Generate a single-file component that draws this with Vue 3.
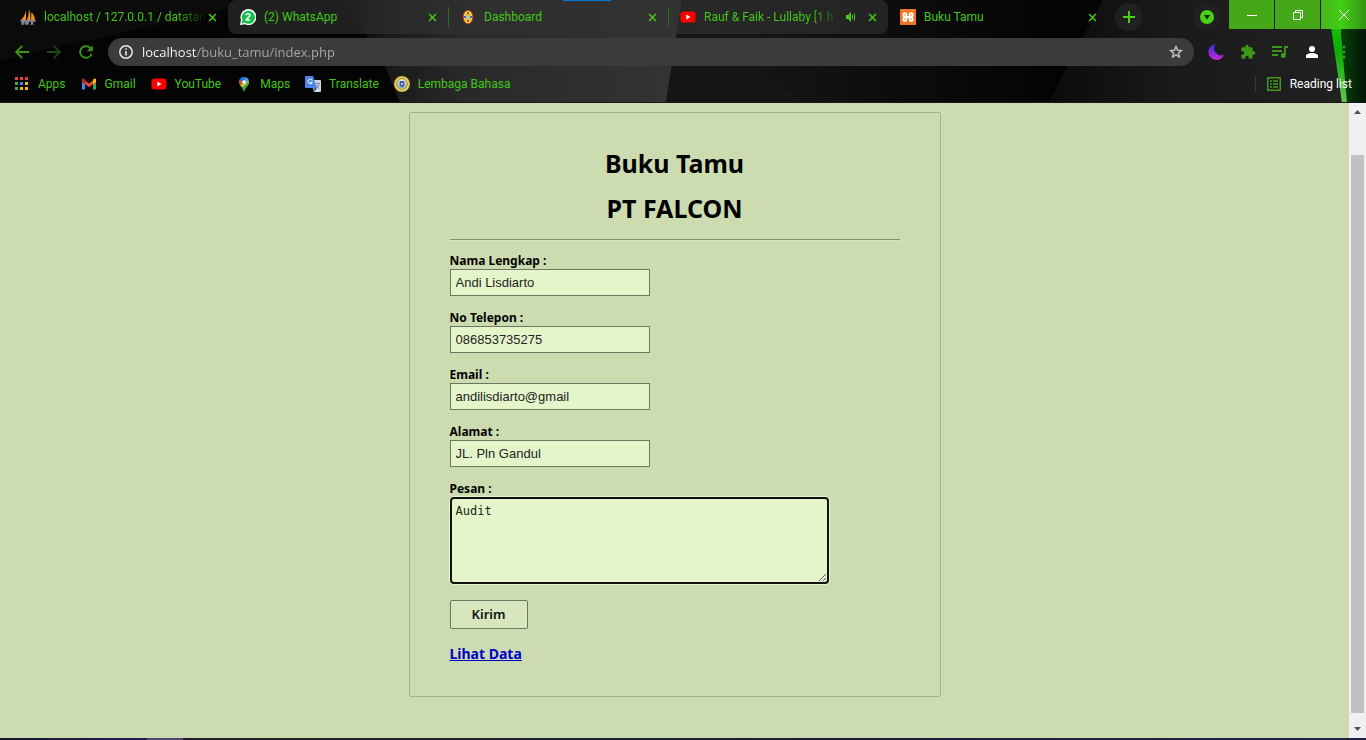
<script setup>
import { ref } from 'vue'

const address = ref('localhost/buku_tamu/index.php')
const tabs = [
  { title: 'localhost / 127.0.0.1 / datatan', icon: 'pma', kind: 'dark', fade: true },
  { title: '(2) WhatsApp', icon: 'whatsapp', kind: 'first' },
  { title: 'Dashboard', icon: 'crest', kind: 'split' },
  { title: 'Rauf & Faik - Lullaby [1 h', icon: 'youtube', kind: 'last', sound: true, fade: true },
  { title: 'Buku Tamu', icon: 'xampp', kind: 'dark' },
]
const bookmarks = [
  { title: 'Apps', icon: 'apps' },
  { title: 'Gmail', icon: 'gmail' },
  { title: 'YouTube', icon: 'youtube' },
  { title: 'Maps', icon: 'maps' },
  { title: 'Translate', icon: 'translate' },
  { title: 'Lembaga Bahasa', icon: 'seal' },
]
const dots = [0, 1, 2].flatMap((r) => [0, 1, 2].map((c) => ({ r, c })))
const dotColors = ['#ea4335', '#ea4335', '#ea4335', '#34a853', '#4285f4', '#fbbc05', '#34a853', '#fbbc05', '#fbbc05']
const fields = ref([
  { id: 'nama', label: 'Nama Lengkap :', value: 'Andi Lisdiarto' },
  { id: 'telepon', label: 'No Telepon :', value: '086853735275' },
  { id: 'email', label: 'Email :', value: 'andilisdiarto@gmail' },
  { id: 'alamat', label: 'Alamat :', value: 'JL. Pln Gandul' },
])
const pesan = ref('Audit')
</script>

<template>
  <div class="window">
    <svg class="defs" width="0" height="0" aria-hidden="true">
      <symbol id="i-pma" viewBox="0 0 16 16">
        <path d="M6 1 6 11H1Q5 7 6 1zM9 0Q11 5 10.5 11H7Q9 6 9 0zM11.500 3Q15 7 15 11h-4z" fill="#f39018" />
        <path d="M0 11h16l-1 2H1z" fill="#7b7d97" />
        <path d="M2 16v-3h2v2H2M6 16v-3l1 2 1-2v3M11 16l1-3 1.500 3" fill="none" stroke="#a3a5b5" />
      </symbol>
      <symbol id="i-whatsapp" viewBox="0 0 16 16">
        <path d="M0 16l1-5A8 8 0 1 1 5 15.300z" fill="#fff" />
        <path d="M1.500 14.500l1-3.500A6.500 6.500 0 1 1 5 13.800z" fill="#0cc143" />
        <path d="M6 6.300C6 4.200 10 4.300 10 6.300 10 8 6.300 9.500 6.100 11H10.200" fill="none" stroke="#fff" stroke-width="1.500" />
      </symbol>
      <symbol id="i-crest" viewBox="0 0 16 16">
        <ellipse cx="8" cy="8" rx="4.700" ry="6.600" fill="#ffdc32" stroke="#dd4823" />
        <path d="M8 2.500v11M4 8h8M5 5l6 6M11 5l-6 6" stroke="#d98d31" />
        <circle cx="8" cy="8" r="2" fill="#a7d0c0" />
        <path d="M7 3h2v2H7zM7 11h2v2H7zM4 7h2v2H4zM10 7h2v2h-2z" fill="#5160a0" />
      </symbol>
      <symbol id="i-youtube" viewBox="0 0 16 16">
        <rect y="2.500" x=".5" width="15" height="11" rx="2.800" fill="#f00" />
        <path d="M6.300 5.600v4.800L10.500 8z" fill="#fff" />
      </symbol>
      <symbol id="i-xampp" viewBox="0 0 16 16">
        <rect width="16" height="16" rx="1" fill="#f37623" />
        <path d="M6.300 8V5.500C6.300 3.600 3.300 3.600 3.300 5.500 3.300 6.500 3.800 7.300 4.500 8 3.800 8.700 3.300 9.500 3.300 10.500 3.300 12.400 6.300 12.400 6.300 10.500V8H9.700V5.500C9.700 3.600 12.700 3.600 12.700 5.500 12.700 6.500 12.200 7.300 11.500 8 12.200 8.700 12.700 9.500 12.700 10.500 12.700 12.400 9.700 12.400 9.700 10.500V8" fill="none" stroke="#fff" stroke-width="1.900" stroke-linejoin="round" />
      </symbol>
      <symbol id="i-apps" viewBox="0 0 16 16">
        <rect v-for="(d, i) in dots" :key="i" :x="1 + d.c * 5" :y="1 + d.r * 5" width="3" height="3" :fill="dotColors[i]" />
      </symbol>
      <symbol id="i-gmail" viewBox="0 0 16 16">
        <path d="M1 4v9.500h3V7z" fill="#4285f4" />
        <path d="M15 4v9.500h-3V7z" fill="#34a853" />
        <path d="M4 4.500l4 3 4-3V8.200l-4 3-4-3z" fill="#ea4335" />
        <path d="M1 4c0-1.800 1.800-2 3 0v4.200L1 6z" fill="#c5221f" />
        <path d="M15 4c0-1.800-1.800-2-3 0v4.200L15 6z" fill="#fbbc04" />
      </symbol>
      <symbol id="i-maps" viewBox="0 0 16 16">
        <path d="M3 6a5 5 0 0 1 10 0c0 4-4 5-5 10-1-5-5-6-5-10z" fill="#34a853" />
        <path d="M3.700 3.500A5 5 0 0 1 10 1.400L5.500 7z" fill="#1a73e8" />
        <path d="M3.700 3.500L6.500 6 4.200 9C3.200 7.500 2.600 5.500 3.700 3.500z" fill="#ea4335" />
        <path d="M10 1.400A5 5 0 0 1 12.700 4L8 9.500 6.500 7.500z" fill="#4c9af5" />
        <path d="M4.200 9L9.700 7l3.200-2c.5 4-2.600 5-4 8L6 11z" fill="#fbbc04" />
        <path d="M12.900 5.500c.5 4-4 5.500-4.900 10.500-.4-2-1.200-3.200-2-4.200z" fill="#34a853" />
        <circle cx="8" cy="6" r="1.800" fill="#fff" />
      </symbol>
      <symbol id="i-translate" viewBox="0 0 16 16">
        <path d="M6 4h9q1 0 1 1v10q0 1-1 1H9z" fill="#d5d9df" />
        <path d="M1 0h7l4 12H1q-1 0-1-1V1q0-1 1-1z" fill="#4b86ec" />
        <path d="M9 12h3l-2.500 4z" fill="#3059b0" />
        <path d="M7.300 4.400A2.300 2.300 0 1 0 7.400 6.500H5.200" fill="none" stroke="#fff" />
        <path d="M10.500 7.500h4.500M12.700 6.500v1M14.300 7.700q-.8 3-3 4.500M11.500 9q1 2.500 3 3.500" fill="none" stroke="#6d7c93" stroke-width=".8" />
      </symbol>
      <symbol id="i-seal" viewBox="0 0 16 16">
        <circle cx="8" cy="8" r="7.300" fill="#fff" stroke="#d2b632" stroke-width="1.400" />
        <circle cx="8" cy="8" r="5.400" fill="#e4eadf" stroke="#b39d2e" stroke-width="1.500" />
        <path d="M4 7v3q4 4 8 0V7" fill="none" stroke="#6eae93" />
        <path d="M5.500 5h5v5l-2.500 1.500L5.500 10z" fill="#4a55aa" />
        <path d="M7 7h2v2H7z" fill="#b6bce6" />
      </symbol>
    </svg>

    <header class="chrome">
      <svg class="backdrop" viewBox="0 0 1366 103" preserveAspectRatio="none" aria-hidden="true">
        <defs>
          <linearGradient id="g-panel"><stop offset="0" stop-color="#030403" /><stop offset=".14" stop-color="#1a1b1a" /><stop offset=".35" stop-color="#292929" /><stop offset="1" stop-color="#343434" /></linearGradient>
          <linearGradient id="g-mid"><stop offset="0" stop-color="#191919" /><stop offset="1" stop-color="#020302" /></linearGradient>
          <linearGradient id="g-right"><stop offset="0" stop-color="#0b0b0b" /><stop offset=".4" stop-color="#1a1a1a" /><stop offset="1" stop-color="#202220" /></linearGradient>
          <linearGradient id="g-glow"><stop offset="0" stop-color="#0a4a0a" /><stop offset="1" stop-color="#021505" /></linearGradient>
          <linearGradient id="g-beam" x2="0" y2="1"><stop offset="0" stop-color="#16d400" /><stop offset=".5" stop-color="#0cae06" /><stop offset="1" stop-color="#63c554" /></linearGradient>
        </defs>
        <rect width="1366" height="103" fill="#030403" />
        <path d="M0 60L229 9V0H0z" fill="#0a0b0a" />
        <path d="M345 0H682L666 103H400L385 66z" fill="url(#g-panel)" />
        <path d="M682 0H900V103H666z" fill="#161616" />
        <path d="M700 32L752 66 803 103H1060V0H690z" fill="url(#g-mid)" />
        <path d="M1103 0H1366V103H1048z" fill="url(#g-right)" />
        <path d="M1336 0H1366V103H1345z" fill="url(#g-glow)" />
        <path d="M1327 0H1342L1341 34 1347 103H1342L1332 34z" fill="url(#g-beam)" />
        <rect y="102" width="1366" height="1" fill="#171a14" />
      </svg>

      <div class="strip">
        <nav class="tabs" aria-label="Tab">
          <div v-for="tab in tabs" :key="tab.title" class="tab" :class="tab.kind">
            <svg class="ico"><use :href="'#i-' + tab.icon" /></svg>
            <span class="title" :class="{ fade: tab.fade }">{{ tab.title }}</span>
            <svg v-if="tab.sound" class="sound" viewBox="0 0 12 12" aria-hidden="true">
              <path d="M1 4h2l3-3v10L3 8H1z" fill="#4cc61b" /><path d="M7.500 4v4M9.500 2.500v7" stroke="#4cc61b" />
            </svg>
            <button class="close" type="button" aria-label="Tutup tab">
              <svg viewBox="0 0 10 10"><path d="M1.200 1.200l7.600 7.600M8.800 1.200L1.200 8.800" stroke="currentColor" stroke-width="1.700" /></svg>
            </button>
          </div>
        </nav>
        <button class="round" type="button" aria-label="Tab baru">
          <svg width="12" height="12" viewBox="0 0 12 12"><path d="M6 0v12M0 6h12" stroke="#4bd113" stroke-width="2" /></svg>
        </button>
        <span class="grow"></span>
        <button class="round search" type="button" aria-label="Cari tab">
          <svg width="14" height="14" viewBox="0 0 14 14"><circle cx="7" cy="7" r="7" fill="#4bd113" /><path d="M4 5h6L7 9.500z" fill="#151a13" /></svg>
        </button>
        <div class="winbtns">
          <button type="button" aria-label="Minimalkan"><svg viewBox="0 0 12 12"><path d="M1 6.500h10" /></svg></button>
          <button type="button" aria-label="Pulihkan"><svg viewBox="0 0 12 12"><path d="M1.500 3.500h7v7h-7zM3.500 3.500v-2h7v7h-2" /></svg></button>
          <button type="button" aria-label="Tutup"><svg viewBox="0 0 12 12"><path d="M1 1l10 10M11 1L1 11" /></svg></button>
        </div>
      </div>

      <div class="toolbar">
        <button class="tool nav" type="button" aria-label="Kembali"><svg viewBox="0 0 24 24"><path d="M21.500 10.700H7.200l6-6L11.500 3 2.500 12l9 9 1.700-1.700-6-6h14.300z" /></svg></button>
        <button class="tool nav dim" type="button" aria-label="Maju"><svg viewBox="0 0 24 24"><path d="M2.500 10.700h14.300l-6-6L12.500 3l9 9-9 9-1.700-1.700 6-6H2.500z" /></svg></button>
        <button class="tool nav" type="button" aria-label="Muat ulang"><svg viewBox="0 0 24 24"><path d="M18.400 5.600A9 9 0 1 0 20.700 14.300h-2.700A6.400 6.400 0 1 1 12 5.600c1.700 0 3.300.7 4.500 1.900L13 11h8V3z" /></svg></button>
        <div class="omnibox">
          <svg class="info" viewBox="0 0 14 14"><circle cx="7" cy="7" r="6.200" fill="none" stroke="#e8e8e8" stroke-width="1.500" /><path d="M7 6v4.500M7 3.300v1.500" stroke="#e8e8e8" stroke-width="1.600" /></svg>
          <input v-model="address" class="address" type="text" aria-label="Alamat situs" />
          <button class="star" type="button" aria-label="Tandai"><svg viewBox="0 0 24 24"><path d="M22 9.240l-7.190-.62L12 2 9.190 8.630 2 9.240l5.460 4.730L5.820 21 12 17.270 18.180 21l-1.630-7.030zM12 15.400l-3.760 2.270 1-4.280-3.320-2.880 4.380-.38L12 6.100l1.710 4.040 4.380.38-3.320 2.880 1 4.280z" fill="#c8c8c8" stroke="#c8c8c8" stroke-width=".6" /></svg></button>
        </div>
        <button class="tool" type="button" aria-label="Mode gelap">
          <svg viewBox="0 0 16 16"><defs><linearGradient id="g-moon" x2="0" y2="1"><stop offset="0" stop-color="#4427e8" /><stop offset="1" stop-color="#c22bd8" /></linearGradient></defs><path d="M8 0A8 8 0 1 0 16 10.500 6.700 6.700 0 0 1 8 0z" fill="url(#g-moon)" /></svg>
        </button>
        <button class="tool" type="button" aria-label="Ekstensi"><svg viewBox="0 0 24 24"><path d="M20.500 11H19V7c0-1.100-.9-2-2-2h-4V3.500a2.500 2.500 0 0 0-5 0V5H4c-1.100 0-2 .9-2 2v3.800h1.500a2.700 2.700 0 0 1 0 5.400H2V20c0 1.100.9 2 2 2h3.800v-1.500a2.700 2.700 0 0 1 5.400 0V22H17c1.100 0 2-.9 2-2v-4h1.500a2.500 2.500 0 0 0 0-5z" /></svg></button>
        <button class="tool" type="button" aria-label="Kontrol media"><svg viewBox="0 0 16 16"><path d="M0 2h10v2H0zM0 6h10v2H0zM0 10h6v2H0zM12 2h4v2h-2.200v7.500a2.500 2.500 0 1 1-1.800-2.400z" /></svg></button>
        <button class="tool" type="button" aria-label="Profil"><svg viewBox="0 0 16 16"><circle cx="8" cy="5" r="3" fill="#fff" /><path d="M2 14v-2c0-4 12-4 12 0v2z" fill="#fff" /></svg></button>
        <button class="tool" type="button" aria-label="Menu"><svg viewBox="0 0 16 16"><circle cx="8" cy="3" r="1.500" /><circle cx="8" cy="8" r="1.500" /><circle cx="8" cy="13" r="1.500" /></svg></button>
      </div>

      <nav class="bookmarks" aria-label="Bookmark">
        <a v-for="b in bookmarks" :key="b.title" href="#"><svg class="ico"><use :href="'#i-' + b.icon" /></svg>{{ b.title }}</a>
        <span class="grow"></span>
        <a class="reading" href="#">
          <svg class="ico" viewBox="0 0 16 16"><path d="M1.750 1.750h12.500v12.500H1.750z" fill="none" stroke="#429a1c" stroke-width="1.500" /><path d="M4 5h2M4 8h2M4 11h2M7 5h5M7 8h5M7 11h5" stroke="#429a1c" stroke-width="1.500" /></svg>
          Reading list
        </a>
      </nav>
    </header>

    <div class="viewport">
      <main class="page">
        <form class="card" @submit.prevent>
          <h1>Buku Tamu</h1>
          <h1>PT FALCON</h1>
          <hr />
          <div v-for="f in fields" :key="f.id" class="field">
            <label :for="f.id">{{ f.label }}</label>
            <input :id="f.id" v-model="f.value" type="text" />
          </div>
          <div class="field">
            <label for="pesan">Pesan :</label>
            <textarea id="pesan" v-model="pesan"></textarea>
          </div>
          <button class="send" type="submit">Kirim</button>
          <a class="more" href="#">Lihat Data</a>
        </form>
      </main>
      <div class="scrollbar" aria-hidden="true">
        <svg viewBox="0 0 17 17"><path d="M5 11h7L8.500 7z" fill="#505050" /></svg>
        <div class="track"><div class="thumb"></div></div>
        <svg viewBox="0 0 17 17"><path d="M5 6h7l-3.500 4z" fill="#505050" /></svg>
      </div>
    </div>
    <div class="edge"></div>
  </div>
</template>

<style>
html, body { margin: 0; background: #cddcb0; }
</style>

<style scoped>
.window { display: flex; flex-direction: column; min-height: 100vh; font-family: Roboto, "Open Sans", sans-serif; }
.window * { box-sizing: border-box; }
.defs { position: absolute; }
button { border: 0; padding: 0; background: none; display: flex; align-items: center; justify-content: center; font: inherit; }
svg { display: block; flex: none; }
.grow { flex: 1; }
.ico { width: 16px; height: 16px; }

.chrome { position: relative; height: 103px; color: #43c816; font-size: 12px; }
.chrome::after { content: ""; position: absolute; top: 0; left: 41.2%; width: 48px; height: 1px; background: #0078d7; }
.backdrop { position: absolute; inset: 0; width: 100%; height: 100%; }
.strip, .toolbar, .bookmarks { position: relative; display: flex; align-items: center; }
.strip { height: 34px; padding-left: 8px; align-items: flex-start; }
.tabs { display: flex; flex: 0 1 1100px; min-width: 0; }
.tab { position: relative; display: flex; align-items: center; flex: 1 1 0; min-width: 0; height: 34px; padding: 0 11px 0 12px; }
.tab.first, .tab.split, .tab.last { background: rgba(48, 50, 49, .62); }
.tab.first { border-radius: 8px 0 0 8px; }
.tab.last { border-radius: 0 8px 8px 0; }
.tab.split::before, .tab.last::before { content: ""; position: absolute; left: 0; top: 7px; width: 1px; height: 20px; background: #2f6b1b; }
.title { flex: 1; min-width: 0; margin: 0 0 0 8px; overflow: hidden; white-space: nowrap; }
.fade { -webkit-mask-image: linear-gradient(to left, transparent, #000 32px); mask-image: linear-gradient(to left, transparent, #000 32px); }
.sound { width: 12px; height: 12px; margin: 0 10px 0 4px; }
.close { width: 10px; height: 16px; color: #4cc61b; }
.close svg { width: 9px; height: 9px; }
.round { width: 28px; height: 28px; margin: 3px 0 0 7px; border-radius: 14px; background: #1f201f; }
.search { margin-right: 8px; }
.winbtns { display: flex; gap: 1px; }
.winbtns button { width: 45px; height: 29px; background: #44a817; }
.winbtns button:last-child { background: linear-gradient(90deg, #4cb51c, #41cf13 45%, #359415); }
.winbtns svg { width: 12px; height: 12px; fill: none; stroke: #fff; }

.toolbar { height: 36px; padding: 0 6px; }
.tool { width: 32px; height: 32px; flex: none; }
.tool svg { width: 16px; height: 16px; fill: #3d971b; }
.tool.nav svg { width: 18px; height: 18px; }
.tool.dim svg { fill: #1e4b10; }
.omnibox { display: flex; align-items: center; flex: 1; min-width: 0; height: 28px; margin: 0 6px; padding: 0 10px 0 11px; border-radius: 14px; background: #3b3b3b; }
.info { width: 14px; height: 14px; }
.address { flex: 1; min-width: 0; height: 24px; margin-left: 9px; padding: 0; border: 0; outline: 0; font: 13px "Open Sans", "Noto Sans", sans-serif; color: transparent; background: linear-gradient(90deg, #fff 55px, #a9a9a9 55px); -webkit-background-clip: text; background-clip: text; }
.star svg { width: 16px; height: 16px; }

.bookmarks { height: 28px; padding: 0 14px; gap: 15px; }
.bookmarks a { display: flex; align-items: center; gap: 8px; color: #43c816; text-decoration: none; white-space: nowrap; }
.bookmarks .reading { color: #fff; padding-left: 10px; border-left: 1px solid #294022; }

.viewport { flex: 1; display: flex; }
.page { flex: 1; min-width: 0; padding: 9px 16px 41px; background: #cddcb0; color: #000; }
.card { max-width: 532px; margin: 0 auto; padding: 28px 40px 32px; border: 1px solid #a5b48c; border-radius: 2px; font-family: "Noto Sans", "Open Sans", sans-serif; }
h1 { margin: 0; font-size: 25px; line-height: 45px; font-weight: 700; text-align: center; }
hr { height: 2px; margin: 8px 0 11px; border: 0; border-top: 1px solid #849073; border-bottom: 1px solid #d8e6be; }
.field { display: flex; flex-direction: column; align-items: flex-start; margin-bottom: 13px; }
label { font-size: 12px; line-height: 17px; font-weight: 700; }
.field input { width: 200px; height: 27px; padding: 0 5px; border: 1px solid #6b7661; border-radius: 0; outline: 0; background: #e5f5ca; color: #222; font: 13px "Liberation Sans", Arial, sans-serif; }
textarea { width: 379px; max-width: 100%; height: 87px; padding: 5px 4px; border: 2px solid #101010; border-radius: 4px; outline: 0; box-shadow: 0 0 0 1px #e5f5ca; background: #e5f5ca; color: #222; font: 12px/15px "DejaVu Sans Mono", monospace; resize: both; }
.send { width: 78px; height: 29px; margin-top: 16px; padding-bottom: 2px; border: 1px solid #6b7661; border-radius: 2px; background: #d7e6bc; color: #111; font-family: inherit; font-size: 13px; font-weight: 600; }
.more { display: block; width: max-content; margin-top: 14px; font-size: 14px; line-height: 21px; font-weight: 700; color: #00c; }
.scrollbar { display: flex; flex-direction: column; width: 17px; background: #f0f0f0; }
.scrollbar svg { width: 17px; height: 17px; }
.track { flex: 1; padding: 35px 2px 8px; display: flex; }
.thumb { flex: 1; background: #c1c1c1; }
.edge { height: 2px; background: linear-gradient(90deg, transparent 147px, #55466b 147px, #55466b 183px, transparent 183px), linear-gradient(90deg, #17182f, #2a1b49 11%, #211a2b 15%, #1c1d36 60%, #202344); }
</style>
